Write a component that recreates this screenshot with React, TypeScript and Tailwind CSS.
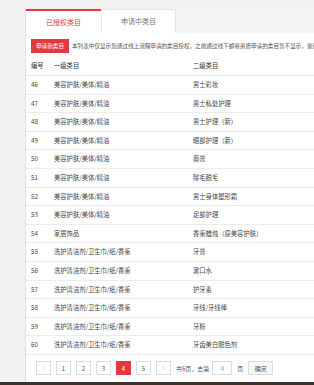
import { ChevronLeft, ChevronRight } from 'lucide-react'

interface Category {
  id: number
  first: string
  second: string
}

const BEAUTY = '美容护肤/美体/精油'
const CLEAN = '洗护清洁剂/卫生巾/纸/香薰'

const rows: Category[] = [
  { id: 46, first: BEAUTY, second: '男士彩妆' },
  { id: 47, first: BEAUTY, second: '男士私处护理' },
  { id: 48, first: BEAUTY, second: '男士护理（新）' },
  { id: 49, first: BEAUTY, second: '眼部护理（新）' },
  { id: 50, first: BEAUTY, second: '唇膏' },
  { id: 51, first: BEAUTY, second: '除毛脱毛' },
  { id: 52, first: BEAUTY, second: '男士身体塑形霜' },
  { id: 53, first: BEAUTY, second: '足部护理' },
  { id: 54, first: '家居饰品', second: '香薰蜡烛（原美容护肤）' },
  { id: 55, first: CLEAN, second: '牙膏' },
  { id: 56, first: CLEAN, second: '漱口水' },
  { id: 57, first: CLEAN, second: '护牙素' },
  { id: 58, first: CLEAN, second: '牙线/牙线棒' },
  { id: 59, first: CLEAN, second: '牙粉' },
  { id: 60, first: CLEAN, second: '牙齿美白脱色剂' }
]

const pages = [1, 2, 3, 4, 5]

export default function App() {
  return (
    <div
      className="w-[314px] h-[385px] overflow-hidden bg-[#f2f2f2] flex flex-col"
      style={{ fontFamily: '"Noto Sans CJK SC", "Noto Sans", sans-serif' }}
    >
      <div className="flex-1 pl-[25px] pt-[9px] min-h-0">
        <div className="h-full bg-white border-l border-[#e2e2e2] flex flex-col">
          {/* Tabs */}
          <div className="flex h-[24px] bg-[#f5f5f5] shrink-0">
            <div className="w-[75px] bg-white border-t-2 border-[#e4393c] flex items-center justify-center text-[7px] text-[#e4393c]">
              已授权类目
            </div>
            <div className="w-[75px] bg-white border border-[#e6e6e6] border-b-0 flex items-center justify-center text-[7px] text-[#777]">
              申请中类目
            </div>
            <div className="flex-1" />
          </div>

          {/* Notice row */}
          <div className="flex items-center h-[16px] mt-[5px] pl-[5px] shrink-0 whitespace-nowrap overflow-hidden">
            <span className="h-[14px] w-[38px] bg-[#e4393c] text-white text-[5.6px] flex items-center justify-center shrink-0">
              申请新类目
            </span>
            <span className="ml-[3px] text-[5.6px] text-[#555]">
              本列表中仅显示您通过线上流程申请的类目授权，之前通过线下邮寄资质申请的类目暂不显示，谢谢！
            </span>
          </div>

          {/* Table */}
          <div className="mt-[3px] text-[6.3px] text-[#444] shrink-0">
            <div className="flex items-center h-[19px] border-b border-[#ececec] text-[#333]">
              <span className="w-[28px] pl-[5px]">编号</span>
              <span className="w-[139px]">一级类目</span>
              <span>二级类目</span>
            </div>
            {rows.map((row) => (
              <div key={row.id} className="flex items-center h-[18.6px] border-b border-[#ececec]">
                <span className="w-[28px] pl-[5px]">{row.id}</span>
                <span className="w-[139px] whitespace-nowrap">{row.first}</span>
                <span className="whitespace-nowrap">{row.second}</span>
              </div>
            ))}
          </div>

          {/* Pagination */}
          <div className="flex-1 flex items-center pl-[10px] gap-[5px] text-[6px] text-[#555]">
            <span className="w-[15px] h-[14px] border border-[#dcdcdc] flex items-center justify-center text-[#bbb]">
              <ChevronLeft className="w-[7px] h-[7px]" strokeWidth={1.5} />
            </span>
            {pages.map((p) => (
              <span
                key={p}
                className={
                  p === 4
                    ? 'w-[15px] h-[14px] bg-[#e4393c] border border-[#e4393c] text-white flex items-center justify-center'
                    : 'w-[15px] h-[14px] border border-[#dcdcdc] flex items-center justify-center'
                }
              >
                {p}
              </span>
            ))}
            <span className="w-[15px] h-[14px] border border-[#dcdcdc] flex items-center justify-center text-[#999]">
              <ChevronRight className="w-[7px] h-[7px]" strokeWidth={1.5} />
            </span>
            <span className="whitespace-nowrap">共6页，去第</span>
            <span className="w-[20px] h-[14px] border border-[#dcdcdc] flex items-center justify-center text-[#999] -ml-[2px]">
              4
            </span>
            <span>页</span>
            <span className="w-[25px] h-[14px] border border-[#dcdcdc] bg-[#f7f7f7] flex items-center justify-center">
              确定
            </span>
          </div>
        </div>
      </div>
      <div className="h-[3px] bg-[#3e2f27] shrink-0" />
    </div>
  )
}
